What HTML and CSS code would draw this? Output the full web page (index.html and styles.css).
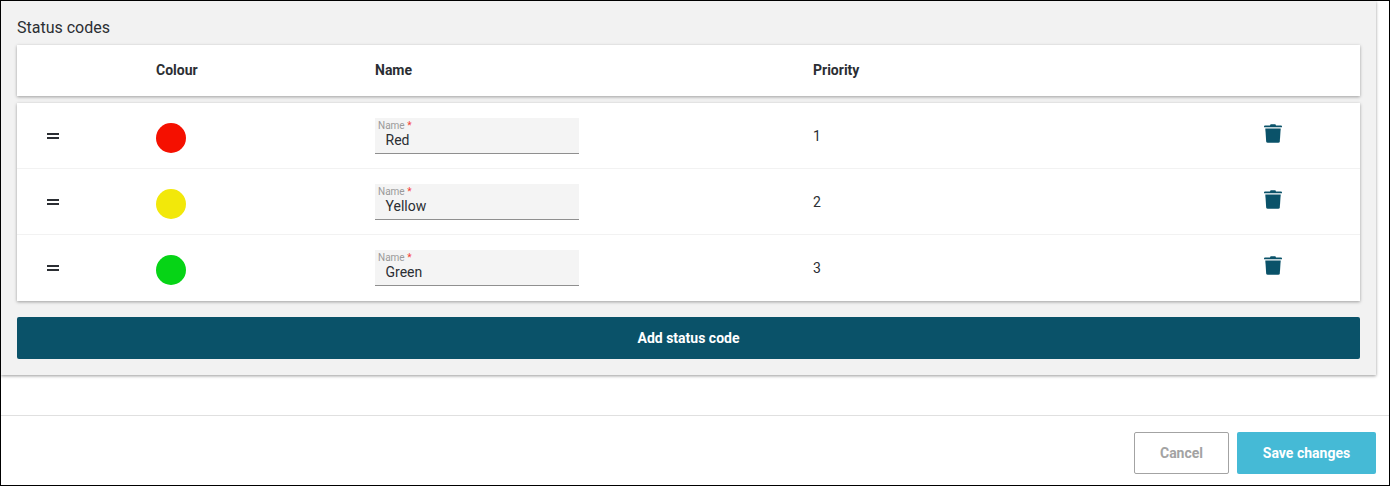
FILE: index.html
```html
<!DOCTYPE html>
<html lang="en">
<head>
<meta charset="utf-8">
<title>Status codes</title>
<link rel="stylesheet" href="styles.css">
</head>
<body>
<div class="frame">
  <section class="panel">
    <h2 class="title">Status codes</h2>
    <div class="card head-card">
      <div class="grid head">
        <div></div>
        <div>Colour</div>
        <div>Name</div>
        <div>Priority</div>
        <div></div>
      </div>
    </div>
    <div class="card rows">
      <div class="grid row">
        <div class="drag"><span></span><span></span></div>
        <div class="dot red"></div>
        <div class="field"><label>Name <b>*</b></label><div class="value">Red</div></div>
        <div class="prio">1</div>
        <svg class="trash" viewBox="0 0 18 20"><path d="M0 3.4C0 2.8.4 2.500 1 2.500H6L6.600 1.200H11.400L12 2.500H17C17.600 2.500 18 2.800 18 3.400V4.300H0Z"/><path d="M1.300 5.400H16.700L15.800 18.600C15.700 19.400 15.200 19.800 14.500 19.800H3.500C2.800 19.800 2.300 19.400 2.200 18.600Z"/></svg>
      </div>
      <div class="grid row">
        <div class="drag"><span></span><span></span></div>
        <div class="dot yellow"></div>
        <div class="field"><label>Name <b>*</b></label><div class="value">Yellow</div></div>
        <div class="prio">2</div>
        <svg class="trash" viewBox="0 0 18 20"><path d="M0 3.4C0 2.8.4 2.500 1 2.500H6L6.600 1.200H11.400L12 2.500H17C17.600 2.500 18 2.800 18 3.400V4.300H0Z"/><path d="M1.300 5.400H16.700L15.800 18.600C15.700 19.400 15.200 19.800 14.500 19.800H3.500C2.800 19.800 2.300 19.400 2.200 18.600Z"/></svg>
      </div>
      <div class="grid row">
        <div class="drag"><span></span><span></span></div>
        <div class="dot green"></div>
        <div class="field"><label>Name <b>*</b></label><div class="value">Green</div></div>
        <div class="prio">3</div>
        <svg class="trash" viewBox="0 0 18 20"><path d="M0 3.4C0 2.8.4 2.500 1 2.500H6L6.600 1.200H11.400L12 2.500H17C17.600 2.500 18 2.800 18 3.400V4.300H0Z"/><path d="M1.300 5.400H16.700L15.800 18.600C15.700 19.400 15.200 19.800 14.500 19.800H3.500C2.800 19.800 2.300 19.400 2.200 18.600Z"/></svg>
      </div>
    </div>
    <button class="add" type="button">Add status code</button>
  </section>
  <footer class="footer">
    <button class="btn cancel" type="button">Cancel</button>
    <button class="btn save" type="button">Save changes</button>
  </footer>
</div>
</body>
</html>
```

FILE: styles.css
```css
* { box-sizing: border-box; }
html, body { margin: 0; padding: 0; }
body {
  width: 1390px;
  height: 486px;
  overflow: hidden;
  background: #fff;
  color: #2b2e33;
  font-family: Roboto, "Liberation Sans", sans-serif;
}
.frame {
  width: 1390px;
  height: 486px;
  border: 1px solid #000;
  display: flex;
  flex-direction: column;
  background: #fff;
}
.panel {
  width: 1375px;
  height: 374px;
  flex: none;
  background: #f2f2f2;
  padding: 16px 16px 0;
  box-shadow: 0 1px 3px rgba(0, 0, 0, .4);
}
.title {
  margin: 0;
  height: 28px;
  font-size: 16px;
  font-weight: 400;
  line-height: 21px;
  color: #2b2e33;
}
.card {
  width: 1343px;
  background: #fff;
  box-shadow: 0 1px 3px rgba(0, 0, 0, .35);
}
.head-card { height: 51px; }
.rows { margin-top: 7px; height: 198px; }
.grid {
  display: grid;
  grid-template-columns: 139px 219px 438px 450px 1fr;
  align-items: center;
}
.head {
  height: 51px;
  font-size: 14px;
  font-weight: 700;
  line-height: 51px;
}
.row {
  height: 66px;
  border-bottom: 1px solid #f2f2f2;
}
.row:last-child { border-bottom-color: transparent; }
.drag {
  display: flex;
  flex-direction: column;
  gap: 2px;
  margin: 1px 0 0 30px;
  width: 12px;
}
.drag span {
  display: block;
  height: 2px;
  background: #2b2e33;
}
.dot {
  width: 30px;
  height: 30px;
  border-radius: 50%;
  margin-top: 4px;
}
.red { background: #f51000; }
.yellow { background: #f2e80a; }
.green { background: #06d416; }
.field {
  width: 204px;
  height: 36px;
  background: #f4f4f4;
  border-bottom: 1px solid #8f8f8f;
  padding: 2px 0 0 3px;
}
.field label {
  display: block;
  font-size: 10px;
  line-height: 11px;
  color: #9a9a9a;
}
.field b { color: #f44336; font-weight: 400; }
.value {
  font-size: 14px;
  line-height: 17px;
  margin: 1px 0 0 7.500px;
  color: #2b2e33;
}
.prio { font-size: 14px; }
.trash {
  width: 18px;
  height: 20px;
  display: block;
  margin: -5px 0 0 1px;
  fill: #0a5269;
}
.add {
  display: block;
  width: 1343px;
  height: 42px;
  margin-top: 16px;
  border: 0;
  border-radius: 2px;
  background: #0a5269;
  color: #fff;
  font: 700 14px Roboto, sans-serif;
}
.footer {
  flex: none;
  margin-top: 40px;
  height: 70px;
  border-top: 1px solid #e0e0e0;
  display: flex;
  justify-content: flex-end;
  gap: 8px;
  padding: 16px 13px 0 0;
}
.btn {
  height: 42px;
  border-radius: 2px;
  font: 700 14px Roboto, sans-serif;
}
.cancel {
  width: 95px;
  background: #fff;
  border: 1px solid #a3a3a3;
  color: #a3a3a3;
}
.save {
  width: 139px;
  background: #45bad6;
  border: 0;
  color: #fff;
}
```
